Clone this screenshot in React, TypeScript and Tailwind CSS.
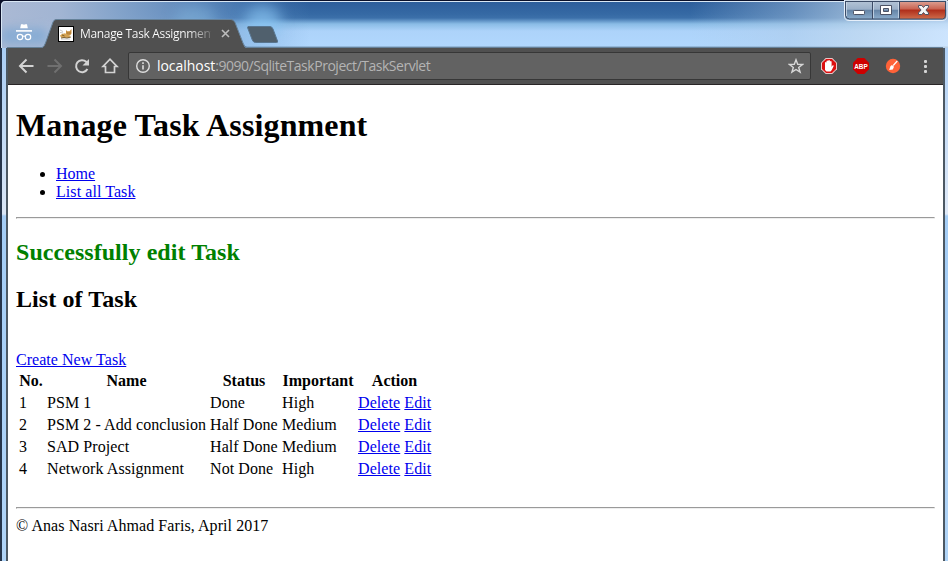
import React from "react";

const tasks = [
  ["1", "PSM 1", "Done", "High"],
  ["2", "PSM 2 - Add conclusion", "Half Done", "Medium"],
  ["3", "SAD Project", "Half Done", "Medium"],
  ["4", "Network Assignment", "Not Done", "High"],
];

function Link({ children, className = "" }: { children: React.ReactNode; className?: string }) {
  return (
    <a href="#" className={`text-[#0000ee] underline ${className}`}>
      {children}
    </a>
  );
}

function Rule() {
  return <hr className="h-[2px] border border-t-[#9a9a9a] border-l-[#9a9a9a] border-r-[#eeeeee] border-b-[#eeeeee]" />;
}

function Incognito() {
  return (
    <svg className="mt-[23px] ml-[15px] h-[18px] w-[18px]" viewBox="0 0 18 18" fill="none">
      <path d="M5.2 5.2 6 1.2h1.8L9 1.700l1.200-.5H12l.8 4z" fill="#fff" />
      <path d="M1 7.900h16" stroke="#fff" strokeWidth="1.600" />
      <circle cx="5" cy="14" r="2.700" stroke="#fff" strokeWidth="1.200" />
      <circle cx="13" cy="14" r="2.700" stroke="#fff" strokeWidth="1.200" />
      <path d="M7.500 13.500q1.500-1 3 0" stroke="#fff" strokeWidth="1.200" />
    </svg>
  );
}

function Tomcat() {
  return (
    <svg className="h-4 w-4 shrink-0" viewBox="0 0 16 16">
      <rect x=".5" y=".5" width="15" height="15" fill="#fff" stroke="#000" />
      <path d="m2 4 3 1.500M2 6.500l3 .5M3 13h9" stroke="#b5b5b5" strokeWidth=".8" />
      <path d="m8 4 1.200 1.300h2.300L13.500 3v4.500L12 9.500l-2.500.3L8 8z" fill="#c9903f" />
      <path d="M2 9.500 4 8l3-.8 4 2.300 1.500 1.500-1.500 1-3-.3L5 12l-2-.5z" fill="#d3a252" />
      <path d="m3 12 3-.5 3 .5 4-1M4 9l2.500 1M9.500 7h.8m1.200 0h.8" stroke="#6a5027" strokeWidth=".8" fill="none" />
    </svg>
  );
}

function TitleBar() {
  return (
    <header className="relative flex h-[48px] overflow-hidden bg-[linear-gradient(180deg,#2c5c99_0px,#3569a4_14px,#3c70aa_18px,#8abce6_24px,#add3fa_31px,#b0d7fd_46px,#7897b3_47px)]">
      <div className="absolute inset-0 bg-[linear-gradient(90deg,#aab9d4_0px,#a6b8d5f5_60px,#8facd0dd_120px,#789dcaaa_190px,#6d9bcd66_240px,transparent_310px,transparent_690px,#b0cae566_790px,#c5daeea8_860px,#dcecffaa_948px)]" />
      <div className="absolute top-[6px] left-[245px] h-8 w-9 rounded-full bg-[#8bc8f4aa] blur-[7px]" />
      <div className="absolute top-[6px] left-[175px] h-7 w-10 rounded-full bg-[#8fc2e766] blur-[7px]" />
      <div className="absolute top-[28px] left-0 h-4 w-12 rounded-full bg-[#78a6d4aa] blur-[5px]" />
      <svg className="absolute inset-0 h-[48px] w-full" viewBox="0 0 948 48" fill="none">
        <path d="M0 0h948v1H5Q1 1 1 6v42H0z" fill="#0a1029" />
        <path d="M1.500 48V6q0-4.500 4.500-4.500h942" stroke="#d9e7f4" />
        <path d="M42 48q2-1 3.500-5L53 22.500q1-3 3-3h175q2.500 0 4 3l8 21q1.500 4 3 4.500z" fill="#505050" />
        <path d="M7 47.500h35q2 0 3.500-4.500L53 22q1-2.500 3-2.500h175q2.500 0 4 3l8 20.500q1.500 4.500 4 4.500H943" stroke="#658199" />
        <path d="M248 26.500h22q2 0 3 2.500l4.500 12q.5 1.500-1 1.500h-21q-2 0-3-2l-5-13z" fill="#50606d" stroke="#58758f" />
      </svg>
      <div className="relative flex w-full">
        <Incognito />
        <div className="mt-[19px] ml-[25px] flex h-7 w-[174px] items-center self-start pt-[1px]">
          <Tomcat />
          <span className="ml-[6px] w-[131px] shrink-0 overflow-hidden bg-[linear-gradient(90deg,#ffffff_82%,#ffffff33)] bg-clip-text whitespace-nowrap font-['Open_Sans',sans-serif] text-[12px] tracking-[-0.33px] text-transparent">
            Manage Task Assignment
          </span>
          <svg className="ml-[10px] h-[9px] w-[9px] shrink-0" viewBox="0 0 9 9">
            <path d="m1 1 7 7m0-7L1 8" stroke="#bcbcbc" strokeWidth="1.600" />
          </svg>
        </div>
      </div>
      <svg className="absolute top-0 right-0 h-[22px] w-[105px]" viewBox="0 0 105 22">
        <defs>
          <linearGradient id="glass" x2="0" y2="1">
            <stop stopColor="#b7c6d8" /><stop offset=".45" stopColor="#9bb0c8" />
            <stop offset=".5" stopColor="#6685a7" /><stop offset="1" stopColor="#91b3d2" />
          </linearGradient>
          <linearGradient id="close" x2="0" y2="1">
            <stop stopColor="#dda497" /><stop offset=".45" stopColor="#c96250" />
            <stop offset=".5" stopColor="#af2d1a" /><stop offset="1" stopColor="#cf6d4b" />
          </linearGradient>
        </defs>
        <path d="M1.500 0v16q0 4.500 4.500 4.500h93q5 0 5-4.500V0z" fill="url(#glass)" stroke="#e6effa" />
        <path d="M57 1h46v14q0 4-4 4H57z" fill="url(#close)" />
        <path d="M2.500 1v14q0 4 4 4h93q3 0 3-4V1M29.500 1v18M56.500 1v18M2 1.500h101" stroke="#3c4c67" fill="none" />
        <path d="M30.500 2v16M55.500 2v16M3.500 2v14" stroke="#cddbea" strokeWidth=".8" />
        <rect x="10.500" y="10.500" width="11" height="4" rx=".8" fill="#fff" stroke="#4d5365" />
        <path d="M37.500 5.500h11v9h-11zm3 3h5v3h-5z" fill="#fff" fillRule="evenodd" stroke="#4d5365" />
        <path d="M75.500 5.500h3.300l1.700 2 1.700-2h3.300v1.600l-2.600 2.900 2.600 2.900v1.600h-3.300l-1.700-2-1.700 2h-3.300v-1.600l2.600-2.900-2.600-2.900z" fill="#f5f5f5" stroke="#4d5365" />
      </svg>
    </header>
  );
}

function Toolbar() {
  return (
    <nav className="flex h-[37px] items-center border-b border-[#292526] bg-[#505050] pb-[1px]">
      <svg className="ml-[10px] h-5 w-[104px]" viewBox="0 0 104 20" fill="none">
        <path d="M15.500 10H2M8.500 3.500 2 10l6.500 6.500" stroke="#d3d3d3" strokeWidth="2" />
        <path d="M29.500 10H43M36.500 3.500 43 10l-6.500 6.500" stroke="#707070" strokeWidth="2" />
        <path d="M69.400 13a6 6 0 1 1-1.200-7.200L70 7.600" stroke="#d3d3d3" strokeWidth="2" />
        <path d="M71 3v6.500h-6.500z" fill="#d3d3d3" />
        <path d="M87.500 10.500H85l7-7.300 7 7.300h-2.500v6h-9z" stroke="#d3d3d3" strokeWidth="1.700" />
      </svg>
      <div className="ml-[6px] flex h-[28px] w-[683px] items-center rounded-[2px] border border-[#373737] bg-[#626262] pl-[6px]">
        <svg className="h-4 w-4" viewBox="0 0 16 16" fill="none">
          <circle cx="8" cy="8" r="6.300" stroke="#dedede" strokeWidth="1.400" />
          <path d="M8 7.200v4.300M8 4.300v1.600" stroke="#dedede" strokeWidth="1.600" />
        </svg>
        <span className="ml-[6px] whitespace-nowrap font-['Open_Sans',sans-serif] text-[14px] leading-5 tracking-[-0.47px] text-[#b4b4b4]">
          <span className="tracking-[-0.05px] text-[#ffffff]">localhost</span>:9090/SqliteTaskProject/TaskServlet
        </span>
        <svg className="mr-[6px] ml-auto h-4 w-4" viewBox="0 0 16 16" fill="none">
          <path d="m8 1.800 1.700 4.500 4.800.2-3.800 3 1.400 4.700L8 11.500l-4.100 2.700 1.400-4.700-3.800-3 4.800-.2z" stroke="#d8d8d8" strokeWidth="1.400" />
        </svg>
      </div>
      <svg className="ml-[10px] h-4 w-4" viewBox="0 0 16 16">
        <path d="M4.700 0h6.600L16 4.700v6.600L11.300 16H4.700L0 11.300V4.700z" fill="#e8c7c7" />
        <path d="M5.100 1h5.800L15 5.100v5.800L10.900 15H5.100L1 10.900V5.100z" fill="#dc1010" />
        <path d="M4 8V4.500q.8-1 1.500 0V7 3q.9-1 1.700 0V7 2.500q.9-1 1.700 0V7 3.500q.9-.9 1.700 0V9l.8-1.500q1.300-.6 1.300.5L10.800 12l-1.300 1.500h-4L4 12z" fill="#fff" />
      </svg>
      <svg className="ml-4 h-4 w-4" viewBox="0 0 16 16">
        <path d="M4.700 0h6.600L16 4.700v6.600L11.300 16H4.700L0 11.300V4.700z" fill="#ce0000" />
        <text x="8" y="11" fontFamily="Liberation Sans, sans-serif" fontSize="8" fontWeight="700" textAnchor="middle" textLength="13.500" lengthAdjust="spacingAndGlyphs" fill="#fff">ABP</text>
      </svg>
      <svg className="ml-4 h-4 w-4" viewBox="0 0 16 16">
        <circle cx="8" cy="8" r="7.200" fill="#ff6238" />
        <path d="m12.300 3-4.100 4.500" stroke="#fff" strokeWidth="1.200" />
        <path d="m7 7 2 1.800-1.200 2.600-3.600.6 1.200-3.800z" fill="#fff" />
      </svg>
      <svg className="ml-[21px] h-4 w-[6px]" viewBox="0 0 6 16" fill="#d5d5d5">
        <rect x="2" y="2" width="3" height="3" rx="1" />
        <rect x="2" y="7" width="3" height="3" rx="1" />
        <rect x="2" y="12" width="3" height="3" rx="1" />
      </svg>
    </nav>
  );
}

function TaskTable() {
  return (
    <table className="w-[418px] table-fixed border-separate border-spacing-[2px] text-left [&_td]:p-[1px] [&_th]:p-[1px]">
      <colgroup>
        <col className="w-[26px]" />
        <col className="w-[161px]" />
        <col className="w-[70px]" />
        <col className="w-[74px]" />
        <col className="w-[75px]" />
      </colgroup>
      <thead>
        <tr className="h-5 text-center">
          {["No.", "Name", "Status", "Important", "Action"].map((heading) => (
            <th key={heading} className="text-center font-bold">{heading}</th>
          ))}
        </tr>
      </thead>
      <tbody>
        {tasks.map((task) => (
          <tr key={task[0]} className="h-5 tracking-[0.08px] whitespace-nowrap">
            {task.map((value, i) => <td key={i}>{value}</td>)}
            <td><Link>Delete</Link> <Link>Edit</Link></td>
          </tr>
        ))}
      </tbody>
    </table>
  );
}

export default function App() {
  return (
    <div className="flex h-[561px] w-[948px] flex-col overflow-hidden bg-[#b0d4f7]">
      <TitleBar />
      <div className="flex min-h-0 flex-1">
        <div className="w-[8px] border-r-2 border-l-2 border-r-[#4c5863] border-l-[#26354b] bg-[linear-gradient(180deg,#a9cef6_0px,#dae6f6_166px,#a4cdf6_168px,#b0d4f7_100%)]" />
        <div className="w-[935px] bg-white">
          <Toolbar />
          <main className="h-[476px] px-2 pt-[21px] font-['Liberation_Serif',serif] text-[16px] leading-[18px] text-black">
            <h1 className="pt-[1px] text-[32px] leading-[36px] font-bold tracking-[0.13px]">Manage Task Assignment</h1>
            <ul className="mt-[22px] list-disc pl-10">
              <li><Link>Home</Link></li>
              <li><Link className="tracking-[0.07px]">List all Task</Link></li>
            </ul>
            <div className="mt-4"><Rule /></div>
            <h2 className="mt-5 text-[24px] leading-[27px] font-bold tracking-[0.05px] text-[#008000]">Successfully edit Task</h2>
            <h2 className="mt-5 text-[24px] leading-[27px] font-bold tracking-[0.09px]">List of Task</h2>
            <p className="mt-[38px]"><Link className="tracking-[0.04px]">Create New Task</Link></p>
            <TaskTable />
            <div className="mt-[26px]"><Rule /></div>
            <footer className="mt-2 tracking-[0.07px]">© Anas Nasri Ahmad Faris, April 2017</footer>
          </main>
        </div>
        <div className="w-[5px] border-l-2 border-l-[#4c5863] bg-[linear-gradient(180deg,#afd0f5_0px,#e0eaf8_166px,#a4cdf6_168px,#b0d4f7_100%)]" />
      </div>
    </div>
  );
}
